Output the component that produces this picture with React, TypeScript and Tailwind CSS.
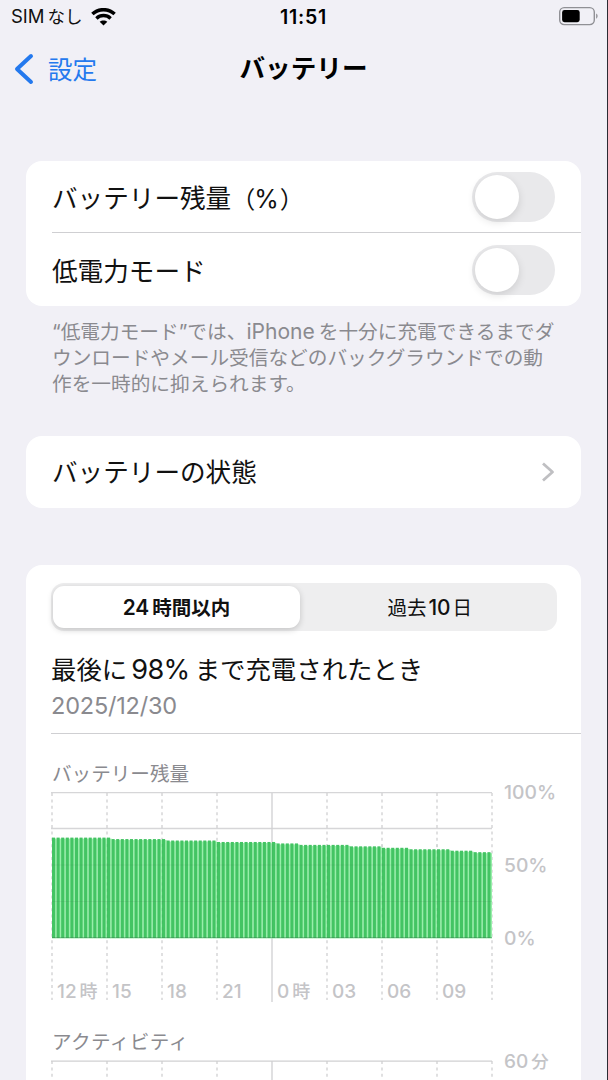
import type { ReactNode } from 'react';

// [battery percentage, number of 15 minute bars at that level]
const LEVELS = [
  [69, 13],
  [68, 12],
  [67, 11],
  [66, 13],
  [65, 5],
  [64, 11],
  [63, 7],
  [62, 6],
  [61, 9],
  [60, 5],
  [59, 4],
];

const BARS = LEVELS.flatMap(([level, count]) => Array.from({ length: count }, () => level));

const HOURS = ['12', '15', '18', '21', '0', '03', '06', '09'];

const CHART_WIDTH = 440;
const BAR_STEP = CHART_WIDTH / 96;

// Latin letters and digits are set slightly larger than the kana around them
const Latin = ({ children, className = '' }: { children: ReactNode; className?: string }) => (
  <span className={`text-[1.07em] leading-none ${className}`}>{children}</span>
);

const Toggle = () => (
  <div className="flex h-[50px] w-[83px] items-center rounded-full bg-[#e9e9eb] p-[3px]">
    <div className="size-[44px] rounded-full bg-white shadow-[0_3px_8px_rgba(0,0,0,0.12)]" />
  </div>
);

// Vertical lines every three hours, solid at midnight
const HourLines = ({ height }: { height: number }) => (
  <g stroke="#d0d0d2" strokeWidth="1.3">
    {Array.from({ length: 9 }, (_, i) => (
      <line
        key={i}
        x1={1 + i * 55}
        x2={1 + i * 55}
        y1="1"
        y2={i === 4 ? height : height - 2}
        strokeDasharray={i === 4 ? undefined : '3 3.4'}
      />
    ))}
  </g>
);

const LevelChart = () => (
  <svg width="444" height="210" viewBox="0 0 444 210" className="block">
    <g stroke="#d6d6d8" strokeWidth="1.3">
      <line x1="0" x2="441" y1="0.7" y2="0.7" />
      <line x1="0" x2="441" y1="36.5" y2="36.5" />
    </g>
    <HourLines height={210} />
    {BARS.map((level, i) => (
      <g key={i}>
        <rect
          x={1 + i * BAR_STEP}
          y={147 - level * 1.455}
          width={BAR_STEP}
          height={level * 1.455 - 0.5}
          fill="#98eeaa"
        />
        <rect
          x={1 + i * BAR_STEP}
          y={146 - level * 1.455}
          width="3.1"
          height={level * 1.455}
          fill="#43c463"
        />
      </g>
    ))}
    <g stroke="#3c7850" strokeOpacity="0.13" strokeWidth="1.2">
      <line x1="1" x2="441" y1="73" y2="73" />
      <line x1="1" x2="441" y1="109.5" y2="109.5" />
      <line x1="1" x2="441" y1="145.5" y2="145.5" strokeOpacity="0.4" />
      {Array.from({ length: 7 }, (_, i) => (
        <line
          key={i}
          x1={56 + i * 55}
          x2={56 + i * 55}
          y1="52"
          y2="146"
          strokeDasharray={i === 3 ? undefined : '3 3.4'}
        />
      ))}
    </g>
  </svg>
);

export default function App() {
  return (
    <div className="h-[1080px] w-[608px] overflow-hidden border-r border-[#2b2b33] bg-[#f1f0f6] font-['Inter','Noto_Sans_CJK_JP',sans-serif] text-[#111]">
      {/* Status bar */}
      <div className="grid h-8 grid-cols-3 items-center pr-[9px] pl-[11px]">
        <div className="flex items-center gap-[8px] pt-px text-[18.5px]">
          <span className="whitespace-nowrap">
            SIM<span className="ml-[3px] text-[17.5px]">なし</span>
          </span>
          <svg width="25" height="18" viewBox="0 0 25 18" fill="none" stroke="#000">
            <path d="M1.4 6C7.5.2 17.5.2 23.6 6" strokeWidth="3.5" />
            <path d="M5.4 10.4c4-3.8 10.2-3.8 14.2 0" strokeWidth="3.4" />
            <path d="M12.5 17.6 8.7 13.8c2-1.9 5.6-1.9 7.6 0z" fill="#000" stroke="none" />
          </svg>
        </div>
        <div className="pt-[3px] pr-[2px] text-center text-[19.5px] font-semibold tracking-[0.8px] text-black">11:51</div>
        <svg width="40" height="20" viewBox="0 0 40 20" className="justify-self-end">
          <rect x="1.7" y="1.6" width="34.6" height="17" rx="4.5" fill="none" stroke="#909095" strokeWidth="1.4" />
          <rect x="4.1" y="4" width="17.6" height="12.2" rx="2.4" fill="#000" />
          <path d="M38.1 7.5c2 .8 2 4.4 0 5.2z" fill="#909095" />
        </svg>
      </div>

      {/* Navigation bar */}
      <div className="grid h-[129px] grid-cols-3 items-start px-[14px] pt-[15px]">
        <div className="flex h-11 items-center gap-[13px] text-[#2479ee]">
          <svg width="21" height="32" viewBox="0 0 21 32" fill="none">
            <path d="M17 3 3 16l14 13" stroke="currentColor" strokeWidth="4" strokeLinecap="round" strokeLinejoin="round" />
          </svg>
          <span className="pt-[2px] text-[24.5px]">設定</span>
        </div>
        <h1 className="h-11 text-center text-[25.6px] leading-[43px] font-bold whitespace-nowrap text-black">
          バッテリー
        </h1>
      </div>

      <main className="pr-[26px] pl-[26px]">
        {/* Toggles */}
        <section className="h-[145px] rounded-[16px] bg-white pl-[26px]">
          <div className="flex h-[72px] items-center justify-between border-b border-[#cfcfd2] pr-[26px] text-[25.6px]">
            <span className="pt-[6px]">
              バッテリー残量
              <span className="-mr-1 text-[24px] tracking-[-2px]">（</span>
              <span className="mr-px ml-[5px] text-[25px]">%</span>
              <span className="text-[24px]">）</span>
            </span>
            <Toggle />
          </div>
          <div className="flex h-[73px] items-center justify-between pr-[26px] text-[25.6px]">
            <span className="pt-[5px]">低電力モード</span>
            <Toggle />
          </div>
        </section>
        <p className="h-[130px] pt-[13px] pl-[26px] text-[19.68px] leading-[26px] whitespace-nowrap text-[#8a8a8f]">
          “低電力モード”では、<Latin>iPhone</Latin>
          <span className="ml-1">を十分に充電できるまでダ</span>
          <br />
          ウンロードやメール受信などのバックグラウンドでの動
          <br />
          作を一時的に抑えられます。
        </p>

        {/* Battery health */}
        <section className="flex h-[72px] items-center justify-between rounded-[16px] bg-white pr-[26px] pl-[26px] text-[25.6px]">
          <span className="pt-[3px]">バッテリーの状態</span>
          <svg width="14" height="22" viewBox="0 0 14 22" fill="none">
            <path d="m2 2.5 9.5 8.5L2 19.5" stroke="#bfbfc2" strokeWidth="2.8" strokeLinejoin="round" />
          </svg>
        </section>

        {/* Usage */}
        <section className="mt-[57px] h-[540px] rounded-t-[16px] bg-white pt-[18px] pl-[25px]">
          <div className="grid h-12 w-[506px] grid-cols-2 rounded-[13px] bg-[#eeeeef] py-[3px] pr-[3px] pl-[2px] text-center text-[19.5px] leading-[44px]">
            <div className="h-[42px] w-[247px] rounded-[11px] bg-white font-bold shadow-[0_2px_6px_rgba(0,0,0,0.18)]">
              <Latin className="mr-[3px] font-semibold">24</Latin>時間以内
            </div>
            <div className="pl-[2px]">
              過去<Latin className="mx-[2px] font-medium">10</Latin>日
            </div>
          </div>

          <div className="h-[103px] border-b border-[#cfcfd2] pt-[18px]">
            <h2 className="h-[42px] text-[25.4px] leading-[42px] whitespace-nowrap">
              最後に<Latin className="mr-[5px] ml-[4px] tracking-[-0.6px]">98%</Latin>まで充電されたとき
            </h2>
            <p className="text-[23.5px] leading-[29px] tracking-[-0.2px] text-[#8a8a8f]">2025/12/30</p>
          </div>

          <h3 className="mt-6 h-[34px] pl-px text-[19.6px] leading-[32px] text-[#8a8a8f]">バッテリー残量</h3>
          <div className="flex">
            <div className="w-[453px]">
              <LevelChart />
              <div className="-mt-[24px] grid h-[24px] w-[440px] grid-cols-8 text-[19px] leading-[27px] font-medium text-[#c4c4c7]">
                {HOURS.map((hour, i) => (
                  <span key={hour} className="pl-[6px] whitespace-nowrap">
                    {hour}
                    {i % 4 === 0 && <span className="ml-[3px] text-[18px]">時</span>}
                  </span>
                ))}
              </div>
            </div>
            <div className="-mt-[12px] flex h-[170px] flex-col justify-between text-[19.3px] leading-6 font-medium text-[#c4c4c7]">
              <span>100%</span>
              <span>50%</span>
              <span>0%</span>
            </div>
          </div>

          <h3 className="mt-[24px] h-[34px] pl-px text-[19.6px] leading-[33px] tracking-[0.4px] text-[#8a8a8f]">
            アクティビティ
          </h3>
          <div className="flex">
            <svg width="453" height="40" viewBox="0 0 453 40">
              <line x1="0" x2="441" y1="1.2" y2="1.2" stroke="#d0d0d2" strokeWidth="1.3" />
              <HourLines height={40} />
            </svg>
            <span className="-mt-[10px] text-[19px] leading-6 font-medium text-[#c4c4c7]">
              60<span className="ml-[3px] text-[17.5px]">分</span>
            </span>
          </div>
        </section>
      </main>
    </div>
  );
}
